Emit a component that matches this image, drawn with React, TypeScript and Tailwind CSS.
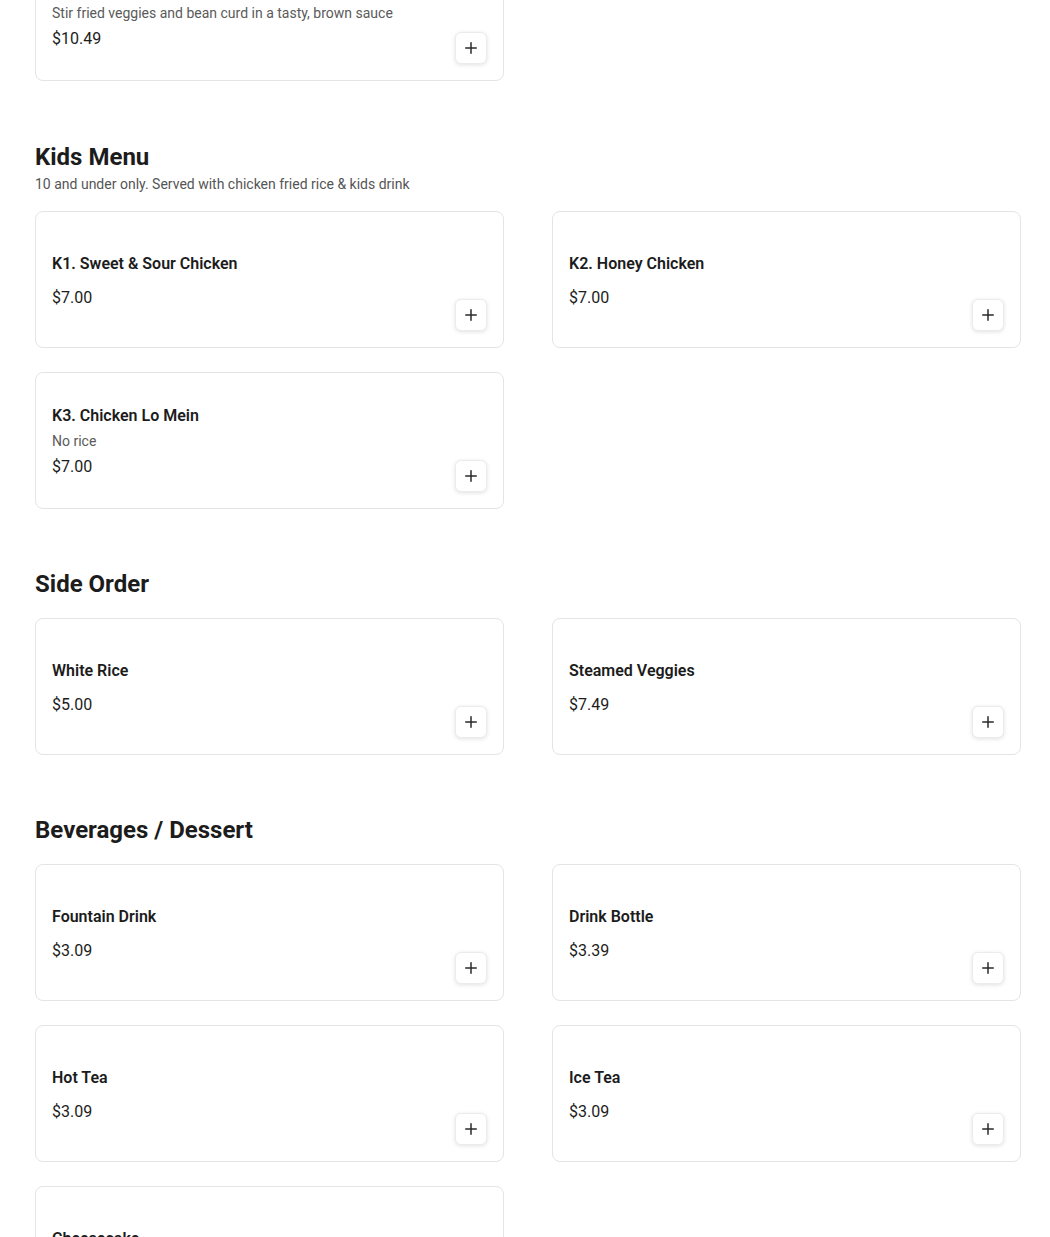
import React from "react";
import { Plus } from "lucide-react";

interface MenuItem {
  name: string;
  price: string;
  description?: string;
}

interface MenuSection {
  title: string;
  subtitle?: string;
  items: MenuItem[];
}

const sections: MenuSection[] = [
  {
    title: "Kids Menu",
    subtitle: "10 and under only. Served with chicken fried rice & kids drink",
    items: [
      { name: "K1. Sweet & Sour Chicken", price: "$7.00" },
      { name: "K2. Honey Chicken", price: "$7.00" },
      { name: "K3. Chicken Lo Mein", price: "$7.00", description: "No rice" },
    ],
  },
  {
    title: "Side Order",
    items: [
      { name: "White Rice", price: "$5.00" },
      { name: "Steamed Veggies", price: "$7.49" },
    ],
  },
  {
    title: "Beverages / Dessert",
    items: [
      { name: "Fountain Drink", price: "$3.09" },
      { name: "Drink Bottle", price: "$3.39" },
      { name: "Hot Tea", price: "$3.09" },
      { name: "Ice Tea", price: "$3.09" },
      { name: "Cheesecake", price: "$4.29" },
    ],
  },
];

function ItemCard({ item }: { item: MenuItem }) {
  return (
    <div className="flex h-[137px] items-center rounded-lg border border-[#e4e4e4] bg-white p-4">
      <div className="flex-1 pt-[2px]">
        <h3 className="text-base leading-6 font-semibold text-[#1c1c1c]">
          {item.name}
        </h3>
        {item.description && (
          <p className="mt-[3px] text-sm leading-5 text-[#5a5a5a]">
            {item.description}
          </p>
        )}
        <p
          className={`text-base leading-6 text-[#1c1c1c] ${
            item.description ? "mt-1" : "mt-[10px]"
          }`}>
          {item.price}
        </p>
      </div>
      <button className="flex h-8 w-8 shrink-0 items-center justify-center self-end rounded-md border border-[#ececec] bg-white text-[#2a2a2a] shadow-[0_1px_4px_rgba(0,0,0,0.12)]">
        <Plus size={18} strokeWidth={2} />
      </button>
    </div>
  );
}

export default function App() {
  return (
    <div
      className="min-h-screen bg-white pl-[35px] pr-[29px] pb-16"
      style={{ fontFamily: "Roboto, 'Liberation Sans', sans-serif" }}>
      {/* tail of the previous section, scrolled mostly out of view */}
      <div className="-mt-[56px] grid grid-cols-2 gap-x-12 gap-y-6">
        <ItemCard
          item={{
            name: "Bean Curd with Mixed Veggies",
            price: "$10.49",
            description: "Stir fried veggies and bean curd in a tasty, brown sauce",
          }}
        />
      </div>

      {sections.map((section) => (
        <section
          key={section.title}
          className={section.subtitle ? "mt-[60px]" : "mt-[59px]"}>
          <h2 className="text-2xl leading-8 font-bold text-[#1c1c1c]">
            {section.title}
          </h2>
          {section.subtitle && (
            <p className="mt-[1px] text-sm leading-5 text-[#555555]">
              {section.subtitle}
            </p>
          )}
          <div
            className={`grid grid-cols-2 gap-x-12 gap-y-6 ${
              section.subtitle ? "mt-[17px]" : "mt-[18px]"
            }`}>
            {section.items.map((item) => (
              <ItemCard key={item.name} item={item} />
            ))}
          </div>
        </section>
      ))}
    </div>
  );
}
